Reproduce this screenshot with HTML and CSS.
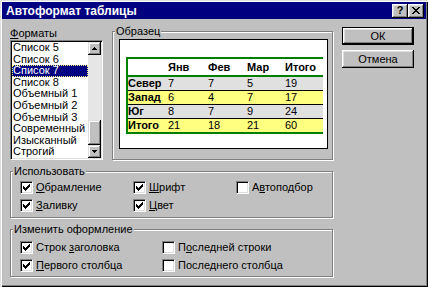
FILE: index.html
```html
<!DOCTYPE html>
<html lang="ru">
<head>
  <meta charset="UTF-8" />
  <title>Автоформат таблицы</title>
  <link rel="stylesheet" href="styles.css">
</head>
<body>

  <div class="window">
    <div class="titlebar">
      <span class="title">Автоформат таблицы</span>
      <span class="cap-btn help">?</span>
      <span class="cap-btn">
        <svg width="8" height="7" viewBox="0 0 8 7"><path d="M0 0h2v1H0z M6 0h2v1H6z M1 1h2v1H1z M5 1h2v1H5z M2 2h4v1H2z M3 3h2v1H3z M2 4h4v1H2z M1 5h2v1H1z M5 5h2v1H5z M0 6h2v1H0z M6 6h2v1H6z" fill="#000"/></svg>
      </span>
    </div>

    <div class="content">
      <div class="main">
        <div class="top">
          <div class="formats">
            <div class="field-label"><u>Ф</u>орматы</div>
            <div class="listbox">
              <ul class="items">
                <li>Список 5</li>
                <li>Список 6</li>
                <li class="selected">Список 7</li>
                <li>Список 8</li>
                <li>Объемный 1</li>
                <li>Объемный 2</li>
                <li>Объемный 3</li>
                <li>Современный</li>
                <li>Изысканный</li>
                <li>Строгий</li>
              </ul>
              <div class="scrollbar">
                <div class="sb-btn">
                  <svg width="5" height="3" viewBox="0 0 5 3"><path d="M2 0h1v1H2z M1 1h3v1H1z M0 2h5v1H0z" fill="#000"/></svg>
                </div>
                <div class="sb-track"></div>
                <div class="sb-thumb"></div>
                <div class="sb-btn">
                  <svg width="5" height="3" viewBox="0 0 5 3"><path d="M0 0h5v1H0z M1 1h3v1H1z M2 2h1v1H2z" fill="#000"/></svg>
                </div>
              </div>
            </div>
          </div>

          <div class="group sample">
            <span class="group-title">Образец</span>
            <div class="preview">
              <table class="sample-table">
                <colgroup>
                  <col class="c-label"><col class="c1"><col class="c2"><col class="c3"><col class="c4">
                </colgroup>
                <tr class="head"><td></td><td>Янв</td><td>Фев</td><td>Мар</td><td>Итого</td></tr>
                <tr class="gray"><th>Север</th><td>7</td><td>7</td><td>5</td><td>19</td></tr>
                <tr class="yellow"><th>Запад</th><td>6</td><td>4</td><td>7</td><td>17</td></tr>
                <tr class="gray"><th>Юг</th><td>8</td><td>7</td><td>9</td><td>24</td></tr>
                <tr class="yellow last"><th>Итого</th><td>21</td><td>18</td><td>21</td><td>60</td></tr>
              </table>
            </div>
          </div>
        </div>

        <div class="group use">
          <span class="group-title">Использовать</span>
          <div class="check-grid use-grid">
            <label class="check"><span class="box on"><svg width="7" height="7" viewBox="0 0 7 7"><path d="M0 2h1v3H0z M1 3h1v3H1z M2 4h1v3H2z M3 3h1v3H3z M4 2h1v3H4z M5 1h1v3H5z M6 0h1v3H6z" fill="#000"/></svg></span><span><u>О</u>брамление</span></label>
            <label class="check"><span class="box on"><svg width="7" height="7" viewBox="0 0 7 7"><path d="M0 2h1v3H0z M1 3h1v3H1z M2 4h1v3H2z M3 3h1v3H3z M4 2h1v3H4z M5 1h1v3H5z M6 0h1v3H6z" fill="#000"/></svg></span><span><u>Ш</u>рифт</span></label>
            <label class="check"><span class="box"></span><span>А<u>в</u>топодбор</span></label>
            <label class="check"><span class="box on"><svg width="7" height="7" viewBox="0 0 7 7"><path d="M0 2h1v3H0z M1 3h1v3H1z M2 4h1v3H2z M3 3h1v3H3z M4 2h1v3H4z M5 1h1v3H5z M6 0h1v3H6z" fill="#000"/></svg></span><span><u>З</u>аливку</span></label>
            <label class="check"><span class="box on"><svg width="7" height="7" viewBox="0 0 7 7"><path d="M0 2h1v3H0z M1 3h1v3H1z M2 4h1v3H2z M3 3h1v3H3z M4 2h1v3H4z M5 1h1v3H5z M6 0h1v3H6z" fill="#000"/></svg></span><span><u>Ц</u>вет</span></label>
          </div>
        </div>

        <div class="group change">
          <span class="group-title">Изменить оформление</span>
          <div class="check-grid change-grid">
            <label class="check"><span class="box on"><svg width="7" height="7" viewBox="0 0 7 7"><path d="M0 2h1v3H0z M1 3h1v3H1z M2 4h1v3H2z M3 3h1v3H3z M4 2h1v3H4z M5 1h1v3H5z M6 0h1v3H6z" fill="#000"/></svg></span><span>Строк <u>з</u>аголовка</span></label>
            <label class="check"><span class="box"></span><span>П<u>о</u>следней строки</span></label>
            <label class="check"><span class="box on"><svg width="7" height="7" viewBox="0 0 7 7"><path d="M0 2h1v3H0z M1 3h1v3H1z M2 4h1v3H2z M3 3h1v3H3z M4 2h1v3H4z M5 1h1v3H5z M6 0h1v3H6z" fill="#000"/></svg></span><span><u>П</u>ервого столбца</span></label>
            <label class="check"><span class="box"></span><span>Последнего столбца</span></label>
          </div>
        </div>
      </div>

      <div class="side">
        <button class="btn default">ОК</button>
        <button class="btn">Отмена</button>
      </div>
    </div>
  </div>

</body>
</html>
```

FILE: styles.css
```css
body {
  margin: 0;
  background: #c0c0c0;
  font-family: "Liberation Sans", Arial, sans-serif;
  font-size: 11px;
  color: #000;
}

.window {
  width: 428px;
  height: 287px;
  box-sizing: border-box;
  padding: 2px;
  background: #c0c0c0;
  box-shadow: inset 1px 1px 0 #dfdfdf, inset 2px 2px 0 #fff,
              inset -1px -1px 0 #000, inset -2px -2px 0 #808080;
}

/* caption */
.titlebar {
  height: 17px;
  display: flex;
  align-items: center;
  padding: 0 2px 0 4px;
  background: #000080;
}

.title {
  flex: 1;
  color: #fff;
  font-weight: bold;
  font-size: 12px;
}

.cap-btn {
  width: 16px;
  height: 14px;
  box-sizing: border-box;
  display: flex;
  align-items: center;
  justify-content: center;
  background: #c0c0c0;
  font-weight: bold;
  font-size: 11px;
  box-shadow: inset -1px -1px 0 #000, inset 1px 1px 0 #fff,
              inset -2px -2px 0 #808080, inset 2px 2px 0 #dfdfdf;
}

.cap-btn.help {
  padding-bottom: 1px;
}

/* main layout */
.content {
  display: flex;
  gap: 9px;
  padding: 8px 0 0 8px;
}

.main {
  width: 323px;
}

.top {
  display: flex;
  gap: 9px;
  height: 133px;
}

.formats {
  width: 93px;
}

.field-label {
  height: 13px;
  line-height: 13px;
}

/* list box */
.listbox {
  height: 120px;
  box-sizing: border-box;
  display: flex;
  padding: 1px;
  background: #fff;
  border: 1px solid;
  border-color: #808080 #fff #fff #808080;
  box-shadow: inset 1px 1px 0 #000, inset -1px -1px 0 #dfdfdf;
}

.items {
  flex: 1;
  margin: 0;
  padding: 0;
  list-style: none;
  overflow: hidden;
}

.items li {
  height: 11.6px;
  line-height: 11.6px;
  padding-left: 1px;
  white-space: nowrap;
}

.items li.selected {
  background: #000080;
  color: #fff;
  outline: 1px dotted #ffff80;
  outline-offset: -1px;
}

.scrollbar {
  width: 13px;
  display: flex;
  flex-direction: column;
  background: #e6e6e6;
}

.sb-btn,
.sb-thumb {
  background: #c0c0c0;
  box-shadow: inset -1px -1px 0 #000, inset 1px 1px 0 #dfdfdf,
              inset -2px -2px 0 #808080, inset 2px 2px 0 #fff;
}

.sb-btn {
  height: 13px;
  display: flex;
  align-items: center;
  justify-content: center;
}

.sb-btn svg {
  display: block;
}

.sb-track {
  flex: 1;
}

.sb-thumb {
  height: 25px;
}

/* group boxes */
.group {
  position: relative;
  box-sizing: border-box;
  border: 1px solid #808080;
  box-shadow: inset 1px 1px 0 #fff, 1px 1px 0 #fff;
}

.group-title {
  position: absolute;
  top: -7px;
  left: 2px;
  padding: 0 1px;
  line-height: 13px;
  background: #c0c0c0;
}

.sample {
  width: 221px;
  height: 129px;
  margin-top: 4px;
  padding: 7px 0 0 6px;
}

.preview {
  width: 209px;
  height: 110px;
  box-sizing: border-box;
  padding: 17px 0 0 6px;
  background: #fff;
  border: 1px solid #000;
}

.sample-table {
  width: 197px;
  table-layout: fixed;
  border-spacing: 0;
  border-top: 2px solid #008000;
  border-left: 2px solid #008000;
  border-bottom: 2px solid #008000;
  font-size: 11px;
}

.c-label { width: 40px; }
.c1 { width: 40px; }
.c2 { width: 39px; }
.c3 { width: 38px; }
.c4 { width: 38px; }

.sample-table td,
.sample-table th {
  padding: 0;
  text-align: left;
  white-space: nowrap;
  height: 13px;
  line-height: 13px;
  border-bottom: 1px solid #000;
}

.sample-table th {
  font-weight: bold;
}

.sample-table tr.head td {
  height: 16px;
  line-height: 16px;
  font-weight: bold;
  border-bottom: 2px solid #008000;
}

.sample-table tr.last td,
.sample-table tr.last th {
  border-bottom: none;
}

/* the old preview dithers these fills; flat mid tones read the same */
.sample-table tr.gray {
  background: #e0e0e0;
}

.sample-table tr.yellow {
  background: #ffff80;
}

.use {
  margin-top: 11px;
  height: 47px;
  padding: 9px 0 0 9px;
}

.change {
  margin-top: 11px;
  height: 48px;
  padding: 11px 0 0 9px;
}

.check-grid {
  display: grid;
  grid-auto-rows: 18px;
}

.use-grid {
  grid-template-columns: 113px 103px 1fr;
}

.change-grid {
  grid-template-columns: 142px 1fr;
}

.check {
  display: flex;
  align-items: center;
  gap: 3px;
  height: 13px;
  line-height: 13px;
  white-space: nowrap;
}

.box {
  width: 13px;
  height: 13px;
  box-sizing: border-box;
  flex: none;
  padding: 2px;
  background: #fff;
  border: 1px solid;
  border-color: #808080 #fff #fff #808080;
  box-shadow: inset 1px 1px 0 #000, inset -1px -1px 0 #dfdfdf;
}

.box svg {
  display: block;
}

/* buttons */
.side {
  display: flex;
  flex-direction: column;
  gap: 5px;
}

.btn {
  width: 72px;
  height: 18px;
  box-sizing: border-box;
  padding: 0;
  border: none;
  background: #c0c0c0;
  font-family: inherit;
  font-size: 11px;
  color: #000;
  box-shadow: inset -1px -1px 0 #000, inset 1px 1px 0 #fff,
              inset -2px -2px 0 #808080, inset 2px 2px 0 #dfdfdf;
}

.btn.default {
  border: 1px solid #000;
}
```
